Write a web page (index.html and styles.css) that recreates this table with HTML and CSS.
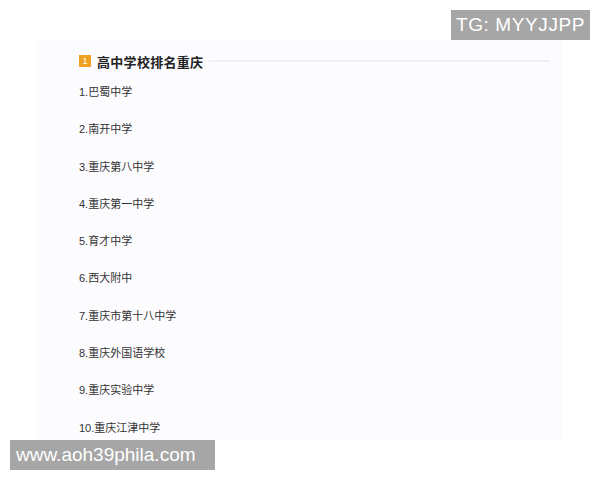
FILE: index.html
```html
<!DOCTYPE html>
<html lang="zh">
<head>
  <meta charset="UTF-8" />
  <meta name="viewport" content="width=device-width, initial-scale=1.0"/>
  <title>高中学校排名重庆</title>
  <link rel="stylesheet" href="styles.css">
</head>
<body>
  <div class="tag tag-top">TG: MYYJJPP</div>

  <div class="article">
    <h2 class="title"><span class="num">1</span><span class="title-text">高中学校排名重庆</span><span class="rule"></span></h2>
    <ul class="rank">
      <li>1.巴蜀中学</li>
      <li>2.南开中学</li>
      <li>3.重庆第八中学</li>
      <li>4.重庆第一中学</li>
      <li>5.育才中学</li>
      <li>6.西大附中</li>
      <li>7.重庆市第十八中学</li>
      <li>8.重庆外国语学校</li>
      <li>9.重庆实验中学</li>
      <li>10.重庆江津中学</li>
    </ul>
  </div>

  <div class="tag tag-bottom">www.aoh39phila.com</div>
</body>
</html>
```

FILE: styles.css
```css
body { margin: 0; background: #fff; font-family: "Liberation Sans", "Noto Sans CJK SC", sans-serif; color: #333; position: relative; width: 600px; height: 480px; overflow: hidden; }
.article { margin: 40px 0 0 37px; width: 525px; height: 400px; background: #fcfbfd; padding: 13px 12px 0 42px; box-sizing: border-box; }
.title { display: flex; align-items: center; margin: 0; height: 16px; font-size: 13px; letter-spacing: 0.3px; font-weight: bold; color: #222; }
.num { display: inline-block; width: 12px; height: 12px; background: #f0a020; color: #fff; font-size: 9px; line-height: 12px; text-align: center; font-weight: normal; margin-right: 6px; letter-spacing: 0; }
.title-text { white-space: nowrap; }
.rule { flex: 1; height: 2px; background: #f0eff2; margin-left: 6px; }
.rank { list-style: none; margin: 0; padding: 16px 0 0 0; }
.rank li { font-size: 11px; height: 37.3px; line-height: 15px; color: #333; }
.tag { position: absolute; background: #a6a6a6; color: #fff; font-family: "Liberation Sans", Arial, sans-serif; white-space: nowrap; }
.tag-top { top: 10px; left: 451px; width: 139px; height: 30px; font-size: 19px; letter-spacing: 0.6px; line-height: 30px; padding-left: 5px; box-sizing: border-box; }
.tag-bottom { top: 440px; left: 10px; width: 205px; height: 30px; font-size: 19px; line-height: 30px; padding-left: 6px; box-sizing: border-box; }
```
